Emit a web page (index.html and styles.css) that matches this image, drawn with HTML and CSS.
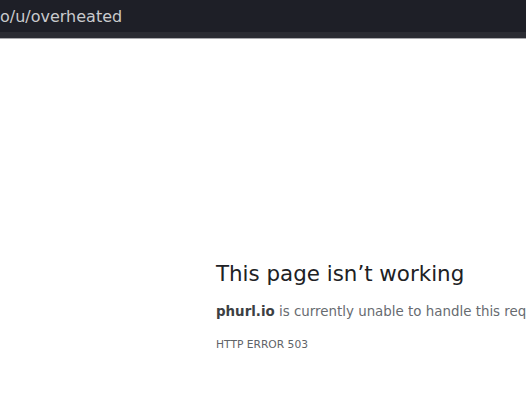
FILE: index.html
```html
<!DOCTYPE html>
<html lang="en">
<head>
    <meta charset="UTF-8">
    <title>phurl.io</title>
    <link rel="stylesheet" href="styles.css">
</head>
<body>

<div class="topbar">
    <div class="address">phurl.io/u/overheated</div>
</div>

<div class="error-page">
    <h1>This page isn’t working</h1>
    <p class="reason"><b>phurl.io</b> is currently unable to handle this request.</p>
    <p class="code">HTTP ERROR 503</p>
</div>

</body>
</html>
```

FILE: styles.css
```css
body {
    margin: 0;
    font-family: "DejaVu Sans", sans-serif;
    background: #fff;
    overflow: hidden;
}
.topbar {
    height: 32px;
    background: #1e1f27;
    border-bottom: 6px solid #2b2c33;
    box-shadow: 0 1px 0 #a9a9ad;
    overflow: hidden;
}
.address {
    margin-left: -51px;
    padding-top: 7px;
    font-size: 16px;
    color: #c9cacd;
    white-space: nowrap;
}
.error-page {
    padding: 223px 0 0 216px;
    white-space: nowrap;
    overflow: hidden;
}
h1 {
    margin: 0;
    font-size: 21.4px;
    font-weight: normal;
    color: #202124;
}
.reason {
    margin: 18px 0 0;
    font-size: 13.4px;
    color: #676b70;
}
.reason b {
    color: #3c4043;
}
.code {
    margin: 19px 0 0;
    font-size: 10.7px;
    color: #5f6368;
}
```
